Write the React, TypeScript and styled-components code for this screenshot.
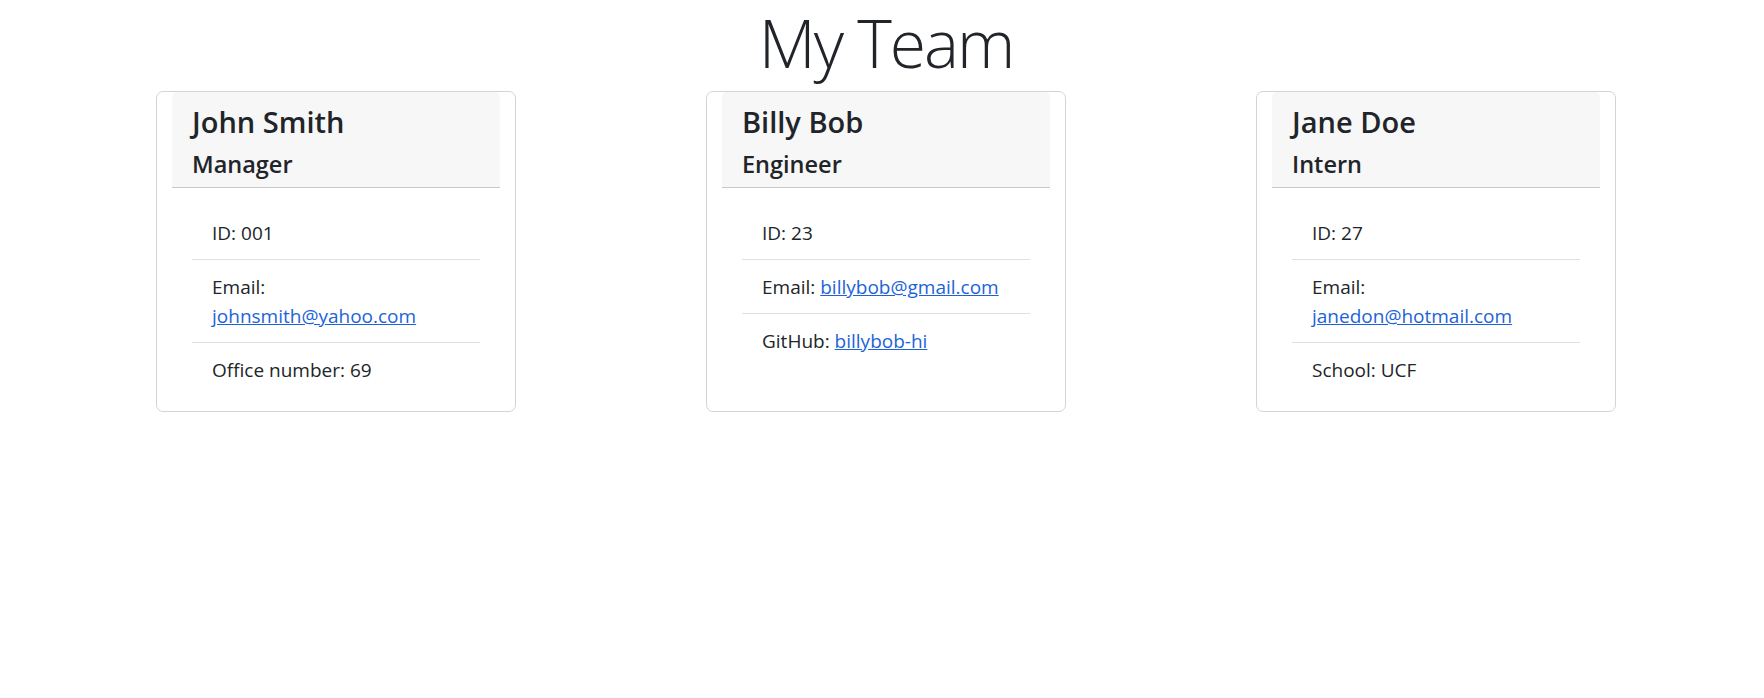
import React from "react";
import styled, { createGlobalStyle } from "styled-components";

const GlobalStyle = createGlobalStyle`
  * {
    box-sizing: border-box;
  }
  body {
    margin: 0;
    padding-left: 8px;
    background: #fff;
    color: #212529;
    font-family: "Open Sans", "Noto Sans", sans-serif;
  }
`;

const Title = styled.h1`
  margin: 0 0 7px;
  font-size: 66px;
  font-weight: 300;
  line-height: 84px;
  letter-spacing: -2px;
  text-align: center;
  color: #212529;
`;

const Cards = styled.div`
  display: flex;
  justify-content: center;
  align-items: stretch;
  gap: 190px;
`;

const Card = styled.div`
  width: 360px;
  padding: 0 15px;
  border: 1px solid #d4d4d4;
  border-radius: 7px;
  background: #fff;
`;

const Header = styled.div`
  padding: 11px 20px 8px;
  background: #f7f7f7;
  border-bottom: 1px solid #c9c9c9;
  border-radius: 5px 5px 0 0;
`;

const Name = styled.h2`
  margin: 0 0 9px;
  font-size: 29px;
  font-weight: 600;
  line-height: 38px;
`;

const Role = styled.h3`
  margin: 0;
  font-size: 23.5px;
  font-weight: 600;
  line-height: 29px;
`;

const Body = styled.div`
  padding: 18px 20px 15px;
`;

const List = styled.ul`
  margin: 0;
  padding: 0;
  list-style: none;
`;

const Item = styled.li`
  padding: 13px 20px 11px;
  font-size: 19px;
  line-height: 29px;
  border-bottom: 1px solid #dfdfdf;
  &:last-child {
    border-bottom: 0;
  }
`;

const Link = styled.a`
  color: #1d63d8;
  text-decoration: underline;
`;

type Member = {
  name: string;
  role: string;
  id: string;
  email: string;
  extra: { label: string; value: string; link?: boolean };
};

const team: Member[] = [
  {
    name: "John Smith",
    role: "Manager",
    id: "001",
    email: "johnsmith@yahoo.com",
    extra: { label: "Office number", value: "69" },
  },
  {
    name: "Billy Bob",
    role: "Engineer",
    id: "23",
    email: "billybob@gmail.com",
    extra: { label: "GitHub", value: "billybob-hi", link: true },
  },
  {
    name: "Jane Doe",
    role: "Intern",
    id: "27",
    email: "janedon@hotmail.com",
    extra: { label: "School", value: "UCF" },
  },
];

export default function App() {
  return (
    <>
      <GlobalStyle />
      <Title>My Team</Title>
      <Cards>
        {team.map((m) => (
          <Card key={m.id}>
            <Header>
              <Name>{m.name}</Name>
              <Role>{m.role}</Role>
            </Header>
            <Body>
              <List>
                <Item>ID: {m.id}</Item>
                <Item>
                  Email: <Link href={`mailto:${m.email}`}>{m.email}</Link>
                </Item>
                <Item>
                  {m.extra.label}:{" "}
                  {m.extra.link ? (
                    <Link href="#">{m.extra.value}</Link>
                  ) : (
                    m.extra.value
                  )}
                </Item>
              </List>
            </Body>
          </Card>
        ))}
      </Cards>
    </>
  );
}
